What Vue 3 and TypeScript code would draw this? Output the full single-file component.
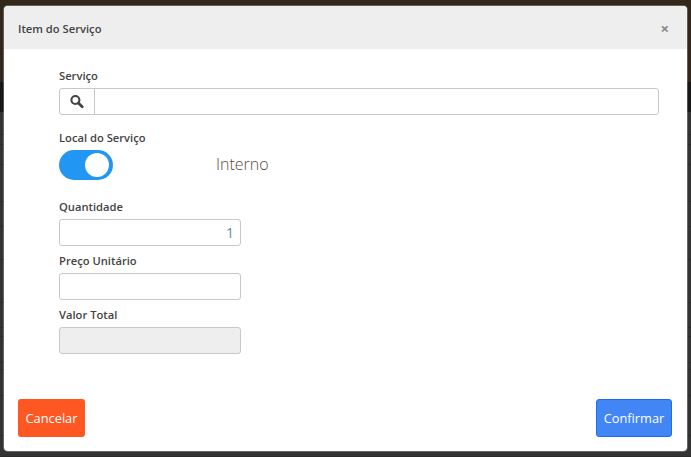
<script setup lang="ts">
// Heights of the dimmed table rows that show at the modal's sides.
const rows: number[] = [23, 10, 20, 37, 25, 33, 43, 25, 9, 26, 7, 26, 40, 21]
</script>

<template>
  <div class="page">
    <div class="backdrop">
      <div class="band-top"></div>
      <div class="band-dark"></div>
      <div v-for="(h, i) in rows" :key="i" class="row" :style="{ height: h + 'px' }"></div>
    </div>
    <div class="modal">
      <header class="head">
        <h4 class="title">Item do Serviço</h4>
        <span class="close">×</span>
      </header>
      <main class="body">
        <label class="lbl">Serviço</label>
        <div class="group">
          <span class="addon">
            <svg width="14" height="14" viewBox="0 0 14 14" fill="none" stroke="#444" stroke-width="2.1">
              <circle cx="5.4" cy="5" r="4" />
              <path d="M8.4 8 L12.2 11.8" stroke-width="2.8" stroke-linecap="round" />
            </svg>
          </span>
          <input class="grow" />
        </div>
        <label class="lbl local">Local do Serviço</label>
        <div class="switch-row">
          <span class="switch"><span class="knob"></span></span>
          <span class="state">Interno</span>
        </div>
        <label class="lbl qty">Quantidade</label>
        <input class="field num" value="1" />
        <label class="lbl sub">Preço Unitário</label>
        <input class="field" />
        <label class="lbl sub">Valor Total</label>
        <input class="field off" disabled />
      </main>
      <footer class="foot">
        <button class="btn cancel">Cancelar</button>
        <button class="btn ok">Confirmar</button>
      </footer>
    </div>
  </div>
</template>

<style>
html, body { margin: 0; background: #333; }
</style>

<style scoped>
.page {
  position: relative;
  width: 691px;
  height: 457px;
  overflow: hidden;
  background: #333;
  font-family: "Open Sans", sans-serif;
  color: #444;
  padding: 6px 4px;
  box-sizing: border-box;
}
.backdrop { position: absolute; inset: 0; display: flex; flex-direction: column; }
.band-top { height: 82px; background: #33271b; flex: none; }
.band-dark { height: 30px; flex: none; background: #171717; }
.row { flex: none; box-sizing: border-box; border-bottom: 1px solid #2a2a2a; }
.modal {
  position: relative;
  height: 445px;
  background: #fff;
  border-radius: 4px;
  display: flex;
  flex-direction: column;
  overflow: hidden;
  box-shadow: 0 0 0 1px rgba(255, 255, 255, 0.25);
}
.head {
  height: 43px;
  background: #eee;
  display: flex;
  align-items: center;
  justify-content: space-between;
  padding: 2px 18px 0 14px;
  box-sizing: border-box;
  flex: none;
}
.title { margin: 0; font-size: 11.2px; font-weight: 600; color: #444; }
.close { font-size: 15px; font-weight: 700; color: #888; line-height: 1; }
.body {
  flex: 1;
  padding: 20px 28px 0 55px;
  display: flex;
  flex-direction: column;
  align-items: flex-start;
}
.lbl { font-size: 11.2px; font-weight: 600; line-height: 14px; color: #444; height: 14px; margin-bottom: 5px; }
.group { display: flex; width: 100%; height: 27px; border: 1px solid #c8c8c8; border-radius: 3px; box-sizing: border-box; }
.addon { width: 35px; display: flex; align-items: center; justify-content: center; border-right: 1px solid #c8c8c8; box-sizing: border-box; }
.grow { flex: 1; border: 0; outline: 0; min-width: 0; background: transparent; }
.local { margin-top: 16px; margin-bottom: 5px; }
.switch-row { display: flex; align-items: center; height: 30px; }
.switch { width: 54px; height: 30px; border-radius: 15px; background: #2196f3; display: flex; align-items: center; justify-content: flex-end; padding-right: 4px; box-sizing: border-box; }
.knob { width: 24px; height: 24px; border-radius: 50%; background: #fff; }
.state { margin-left: 103px; font-size: 16px; font-weight: 300; color: #5a4a3a; margin-top: -3px; }
.qty { margin-top: 20px; }
.sub { margin-top: 8px; }
.field { width: 182px; height: 27px; border: 1px solid #c8c8c8; border-radius: 3px; box-sizing: border-box; outline: 0; background: #fff; font: 14px "Open Sans", sans-serif; color: #5b8db5; padding: 0 6px; }
.num { text-align: right; }
.off { background: #eee; }
.foot { display: flex; justify-content: space-between; padding: 0 15px 14px 14px; flex: none; }
.btn { height: 38px; border-radius: 3px; color: #fff; font: 12.8px "Open Sans", sans-serif; padding: 0; }
.cancel { width: 67px; background: #ff5722; border: 0; }
.ok { width: 76px; background: #4285f4; border: 1px solid #1a6fe8; }
</style>
